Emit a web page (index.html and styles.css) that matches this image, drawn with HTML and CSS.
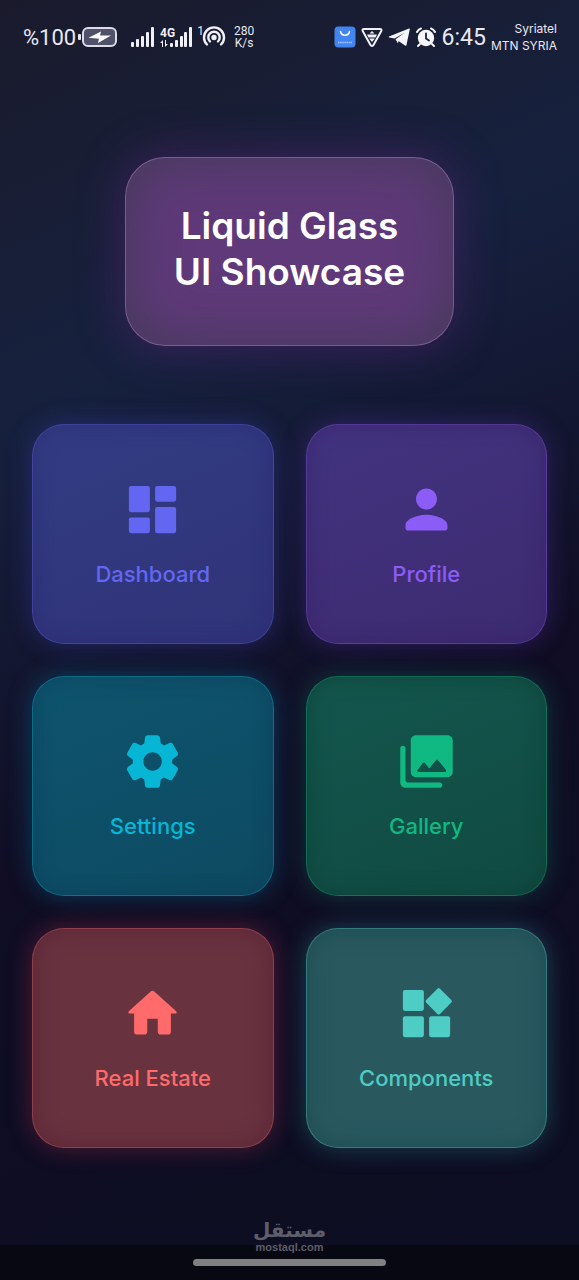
FILE: index.html
```html
<!DOCTYPE html>
<html lang="en">
<head>
<meta charset="utf-8">
<meta name="viewport" content="width=device-width, initial-scale=1">
<title>Liquid Glass UI Showcase</title>
<link rel="stylesheet" href="styles.css">
</head>
<body>
<header class="status">
  <div class="status-group">
    <span class="battery-level">%100</span>
    <svg class="battery" width="40" height="22" viewBox="0 0 40 22" aria-hidden="true">
      <rect x="0" y="8" width="3" height="6" rx="1" fill="#e8e8f2"/>
      <rect x="5" y="2" width="33" height="18" rx="5" fill="#50526a" stroke="#dcdce8" stroke-width="2"/>
      <path d="M10.500 11.800 23 5.500 22 9.500 33 9.500 20 17 21 12.800z" fill="#fff"/>
    </svg>
    <svg class="signal" width="24" height="20" viewBox="0 0 24 20" fill="#f0f0f6" aria-hidden="true">
      <rect x="0" y="15" width="3" height="5" rx="1"/><rect x="5" y="12" width="3" height="8" rx="1"/><rect x="10" y="9" width="3" height="11" rx="1"/><rect x="15" y="5" width="3" height="15" rx="1"/><rect x="20" y="0" width="3" height="20" rx="1"/>
    </svg>
    <svg class="signal-data" width="33" height="22" viewBox="0 0 33 22" fill="#f0f0f6" aria-label="4G">
      <text x="0" y="11" class="net-type">4G</text>
      <path d="M0 17l3-3v7H2v-4zM8 18l-3 3v-7h1v4z"/>
      <rect x="10" y="17" width="3" height="4" rx="1"/><rect x="15" y="14" width="3" height="7" rx="1"/><rect x="20" y="10" width="3" height="11" rx="1"/><rect x="24" y="6" width="3" height="15" rx="1"/><rect x="29" y="1" width="3" height="20" rx="1"/>
    </svg>
    <span class="hotspot-count">1</span>
    <svg class="hotspot" width="24" height="22" viewBox="0 0 24 22" fill="none" stroke="#f0f0f6" stroke-width="2.400" stroke-linecap="round" aria-hidden="true">
      <path d="M5 18.500a10 10 0 1 1 14 0M8 15.500a5.700 5.700 0 1 1 8 0"/><circle cx="12" cy="11.500" r="1.500" fill="#f0f0f6"/>
    </svg>
    <span class="speed"><span>280</span><span>K/s</span></span>
  </div>
  <div class="status-group status-end">
    <svg width="22" height="22" viewBox="0 0 22 22" aria-hidden="true">
      <rect x="0.500" y="0.500" width="21" height="21" rx="4" fill="#4285f0"/>
      <path d="M6.500 5.500c1 5 8 5 9 0" fill="none" stroke="#fff" stroke-width="1.500" stroke-linecap="round"/>
      <path d="M4 16.500h14" stroke="#9cc2fa" stroke-width="1.500" stroke-dasharray="1.600 .5"/>
    </svg>
    <svg width="22" height="22" viewBox="0 0 22 22" fill="none" stroke="#f0f0f6" stroke-width="2" stroke-linejoin="round" aria-hidden="true">
      <path d="M3 3h16c1.300 0 1.800 1 1.300 2l-7.800 14c-.7 1.200-2.300 1.200-3 0L1.700 5C1.200 4 1.700 3 3 3z"/>
      <path d="M6 8.500h10l-1.500 3h-7z" fill="#f0f0f6" stroke="none"/>
      <path d="M8.500 7.500 11 5l2.500 2.500zM8 12.500h6L11 16z" fill="#f0f0f6" stroke="none"/>
    </svg>
    <svg width="22" height="22" viewBox="0 0 22 22" fill="#f5f5fa" aria-hidden="true">
      <path d="M1 10.500 21 2.500c.6-.2.900.1.800.7L18.500 19c-.2.900-.8 1.100-1.500.6L10.500 15l-.5 2.500-2.500-4.300L17 6.500 6.500 12.500l-5.300-1c-.7-.2-.8-.700-.2-1z"/>
    </svg>
    <svg width="22" height="22" viewBox="0 0 22 22" aria-hidden="true">
      <circle cx="11" cy="12" r="8.200" fill="#f5f5fa"/>
      <path d="M2 6c1-2 2-3 4-3.500M20 6c-1-2-2-3-4-3.500M5 18l-2 2M17 18l2 2" fill="none" stroke="#f5f5fa" stroke-width="2" stroke-linecap="round"/>
      <path d="M11 7.500v5l3 2" fill="none" stroke="#17203d" stroke-width="1.800" stroke-linecap="round"/>
    </svg>
    <time class="clock">6:45</time>
    <span class="carriers"><span>Syriatel</span><span>MTN SYRIA</span></span>
  </div>
</header>

<main class="page">
  <h1 class="hero">Liquid Glass<br>UI Showcase</h1>
  <nav class="grid" aria-label="Sections">
    <button class="card dashboard" type="button">
      <svg class="icon" viewBox="0 0 24 24" aria-hidden="true"><rect x="3" y="3" width="8" height="10" rx="0.800"/><rect x="3" y="15" width="8" height="6" rx="0.800"/><rect x="13" y="3" width="8" height="6" rx="0.800"/><rect x="13" y="11" width="8" height="10" rx="0.800"/></svg>
      <span>Dashboard</span>
    </button>
    <button class="card profile" type="button">
      <svg class="icon" viewBox="0 0 24 24" aria-hidden="true"><path d="M12 12c2.210 0 4-1.790 4-4s-1.790-4-4-4-4 1.790-4 4 1.790 4 4 4zm0 2c-2.670 0-8 1.340-8 4v1c0 .55.45 1 1 1h14c.55 0 1-.45 1-1v-1c0-2.660-5.330-4-8-4z"/></svg>
      <span>Profile</span>
    </button>
    <button class="card settings" type="button">
      <svg class="icon" viewBox="0 0 24 24" aria-hidden="true"><path d="M19.500 12c0-.23-.01-.45-.03-.68l1.860-1.410c.4-.3.51-.86.26-1.300l-1.870-3.230c-.25-.44-.79-.62-1.250-.42l-2.150.91c-.37-.26-.76-.49-1.170-.68l-.29-2.310c-.06-.5-.49-.88-.99-.88h-3.730c-.51 0-.94.38-1 .88l-.29 2.310c-.41.19-.8.42-1.170.68l-2.150-.91c-.46-.2-1-.02-1.250.42L2.410 8.620c-.25.44-.14.99.26 1.300l1.860 1.410c-.02.22-.03.44-.03.67s.01.45.03.68l-1.860 1.410c-.4.3-.51.86-.26 1.300l1.870 3.230c.25.44.79.62 1.250.42l2.150-.91c.37.26.76.49 1.170.68l.29 2.310c.06.5.49.88.99.88h3.730c.5 0 .93-.38.99-.88l.29-2.310c.41-.19.8-.42 1.170-.68l2.150.91c.46.2 1 .02 1.250-.42l1.870-3.230c.25-.44.14-.99-.26-1.300l-1.860-1.410c.03-.23.04-.45.04-.68zm-7.460 3.500c-1.930 0-3.500-1.570-3.500-3.500s1.570-3.500 3.500-3.500 3.500 1.570 3.500 3.500-1.570 3.500-3.500 3.500z"/></svg>
      <span>Settings</span>
    </button>
    <button class="card gallery" type="button">
      <svg class="icon" viewBox="0 0 24 24" aria-hidden="true"><path d="M22 16V4c0-1.100-.9-2-2-2H8c-1.100 0-2 .9-2 2v12c0 1.100.9 2 2 2h12c1.100 0 2-.9 2-2zm-10.600-3.470l1.630 2.180 2.580-3.220c.2-.25.58-.25.78 0l2.960 3.700c.26.33.03.81-.39.81H9c-.41 0-.65-.47-.4-.8l2-2.670c.2-.26.6-.26.8 0zM2 7v13c0 1.100.9 2 2 2h13c.55 0 1-.45 1-1s-.45-1-1-1H5c-.55 0-1-.45-1-1V7c0-.55-.45-1-1-1s-1 .45-1 1z"/></svg>
      <span>Gallery</span>
    </button>
    <button class="card estate" type="button">
      <svg class="icon" viewBox="0 0 24 24" aria-hidden="true"><path d="M10 19v-5h4v5c0 .55.45 1 1 1h3c.55 0 1-.45 1-1v-7h1.700c.46 0 .68-.57.33-.87L12.670 3.600c-.38-.34-.96-.34-1.340 0l-8.360 7.530c-.34.3-.13.87.33.87H5v7c0 .55.45 1 1 1h3c.55 0 1-.45 1-1z"/></svg>
      <span>Real Estate</span>
    </button>
    <button class="card components" type="button">
      <svg class="icon" viewBox="0 0 24 24" aria-hidden="true"><rect x="3" y="3" width="8" height="8" rx="0.800"/><rect x="3" y="13" width="8" height="8" rx="0.800"/><rect x="13" y="13" width="8" height="8" rx="0.800"/><rect x="12.900" y="3.600" width="7.500" height="7.500" rx="0.700" transform="rotate(45 16.650 7.350)"/></svg>
      <span>Components</span>
    </button>
  </nav>
</main>

<footer class="navbar">
  <div class="watermark"><span class="mark-ar" lang="ar" dir="rtl">مستقل</span><span class="mark-en">mostaql.com</span></div>
  <div class="home-pill"></div>
</footer>
</body>
</html>
```

FILE: styles.css
```css
* { box-sizing: border-box; }

body {
  margin: 0;
  min-height: 100vh;
  display: flex;
  flex-direction: column;
  background: linear-gradient(156deg, #1a1a2c 0%, #16213e 27%, #100d24 58%, #0c0e22 100%);
  font-family: Inter, "Liberation Sans", sans-serif;
  color: #fff;
}

.status {
  display: flex;
  justify-content: space-between;
  align-items: center;
  height: 74px;
  padding: 0 22px 0 23px;
  font-family: Roboto, "Liberation Sans", sans-serif;
  color: #e8e8f2;
}

.status-group { display: flex; align-items: center; }
.status-end { gap: 5px; }
.battery-level { font-size: 22px; margin-right: 2px; }
.signal { margin-left: 13px; }
.signal-data { margin-left: 5px; }
.net-type { font: 700 12px Roboto, sans-serif; }
.hotspot-count { align-self: flex-start; margin-left: 4px; font-size: 12px; line-height: 12px; }
.hotspot { margin-left: -2px; }
.speed {
  display: flex;
  flex-direction: column;
  align-items: center;
  margin-left: 8px;
  font-size: 12px;
  line-height: 12px;
}
.clock { font-size: 23px; }
.carriers {
  display: flex;
  flex-direction: column;
  align-items: flex-end;
  font: 12px/17px Inter, sans-serif;
}

.page {
  flex: 1;
  display: flex;
  flex-direction: column;
  align-items: center;
  gap: 78px;
  padding: 83px 32px 80px;
}

.hero {
  margin: 0;
  min-width: 329px;
  padding: 45px 46px 50px;
  border: 1px solid rgba(255, 255, 255, .18);
  border-radius: 40px;
  background: #5f3979;
  box-shadow: inset 0 0 60px #423b58, 0 0 48px rgba(118, 38, 150, .42);
  text-align: center;
  font-size: 37px;
  line-height: 46px;
  font-weight: 600;
}

.grid {
  width: 100%;
  display: grid;
  grid-template-columns: 1fr 1fr;
  gap: 32px;
}

.card {
  min-height: 220px;
  display: flex;
  flex-direction: column;
  align-items: center;
  justify-content: center;
  gap: 18px;
  padding: 16px 16px 18px;
  border: 1px solid;
  border-radius: 32px;
  font: 500 22px/30px Inter, "Liberation Sans", sans-serif;
  cursor: pointer;
}

.icon { width: 63px; height: 63px; fill: currentColor; }

.dashboard {
  color: #6366f1;
  border-color: rgba(99, 102, 241, .28);
  background: linear-gradient(156deg, #323c82, #303378);
  box-shadow: inset 0 0 20px rgba(40, 32, 110, .4), 0 0 24px rgba(70, 73, 200, .36);
}
.profile {
  color: #8b5cf6;
  border-color: rgba(139, 92, 246, .28);
  background: linear-gradient(156deg, #423380, #3d2b70);
  box-shadow: inset 0 0 20px rgba(50, 22, 90, .4), 0 0 24px rgba(100, 55, 190, .36);
}
.settings {
  color: #06b6d4;
  border-color: rgba(6, 182, 212, .3);
  background: linear-gradient(156deg, #0e546e, #0d4a61);
  box-shadow: inset 0 0 20px rgba(10, 50, 80, .45), 0 0 24px rgba(6, 130, 170, .38);
}
.gallery {
  color: #10b981;
  border-color: rgba(16, 185, 129, .28);
  background: linear-gradient(156deg, #13564d, #104a42);
  box-shadow: inset 0 0 20px rgba(10, 55, 45, .5), 0 0 24px rgba(16, 130, 105, .36);
}
.estate {
  color: #ff6b6b;
  border-color: rgba(255, 107, 107, .25);
  background: #69323f;
  box-shadow: inset 0 0 22px rgba(80, 30, 50, .6), 0 0 24px rgba(190, 50, 80, .38);
}
.components {
  color: #4ecdc4;
  border-color: rgba(78, 205, 196, .3);
  background: #29595f;
  box-shadow: inset 0 0 22px rgba(22, 68, 76, .65), 0 0 24px rgba(50, 150, 160, .38);
}

.navbar {
  position: relative;
  display: flex;
  justify-content: center;
  height: 35px;
  padding-top: 14px;
  background: #070812;
}
.home-pill { width: 33.3%; height: 7px; border-radius: 4px; background: #808080; }
.watermark {
  position: absolute;
  left: 50%;
  bottom: 27px;
  transform: translateX(-50%);
  display: flex;
  flex-direction: column;
  align-items: center;
  color: #5e5d6c;
}
.mark-ar { font: 700 20px/22px "DejaVu Sans", sans-serif; }
.mark-en { font: 700 11px/12px "Liberation Sans", sans-serif; }
```
